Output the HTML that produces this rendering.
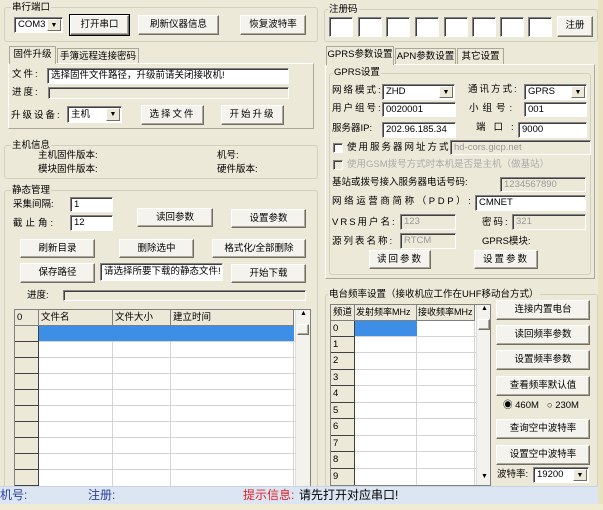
<!DOCTYPE html><html><head><meta charset="utf-8"><style>
*{box-sizing:border-box;margin:0;padding:0;white-space:nowrap}
body{width:603px;height:510px;position:relative;background:#ece9d8;font:9.5px "Liberation Sans","Noto Sans CJK SC",sans-serif;color:#000;overflow:hidden}
div,span{position:absolute}
.g{border:1px solid #d0d0bf;border-radius:3px}
.gl{background:#ece9d8;padding:0 1px;line-height:13px}
.b{background:#f4f3ee;border:1px solid;border-color:#fff #716f64 #716f64 #fff;box-shadow:inset -1px -1px 0 #aca899;text-align:center;line-height:17px}
.i{background:#fff;border:1px solid;border-color:#848284 #fff #fff #848284;box-shadow:inset 1px 1px 0 #404040;padding-left:3px;line-height:13px;overflow:hidden}
.d{color:#999;background:#ece9d8}
.ar{right:1px;top:1px;bottom:1px;width:14px;background:#ece9d8;border:1px solid;border-color:#fff #716f64 #716f64 #fff;font-size:7px;text-align:center;line-height:11px}
.t{line-height:14px}
.tab{border:1px solid #aca899;border-bottom:none;background:#ece9d8;text-align:center;line-height:15px}
.pn{border:1px solid;border-color:#fff #aca899 #aca899 #fff}
.gr{background:#fff;border:1px solid #808080;overflow:hidden}
.rh{background:#ece9d8;border-right:1px solid #404040;border-bottom:1px solid #404040;left:0;padding-left:2px;line-height:15px}
.hl{border-bottom:1px solid #d4d4d4;left:0;right:0}
.vl{border-left:1px solid #d4d4d4;top:0;bottom:0}
.hd{background:#ece9d8;border-right:1px solid #808080;border-bottom:1px solid #808080;top:0;height:16px;padding-left:2px;line-height:15px}
.sb{background:#f3f2ec;border-left:1px solid #ddd}
.w{letter-spacing:2px}
</style></head><body>
<div class="g" style="left:4px;top:7px;width:314px;height:35px"></div>
<span class="gl" style="left:11px;top:1px">串行端口</span>
<div class="i" style="left:14px;top:17px;width:49px;height:16px">COM3<div class="ar">▼</div></div>
<div class="b" style="left:70px;top:15px;width:59px;height:20px;outline:1px solid #000">打开串口</div>
<div class="b" style="left:138px;top:15px;width:81px;height:20px">刷新仪器信息</div>
<div class="b" style="left:240px;top:15px;width:66px;height:20px">恢复波特率</div>
<div class="pn" style="left:8px;top:63px;width:306px;height:66px"></div>
<div class="tab" style="left:9px;top:46px;width:47px;height:18px;z-index:2">固件升级</div>
<div class="tab" style="left:57px;top:48px;width:82px;height:15px">手簿远程连接密码</div>
<span class="t w" style="left:12px;top:68px">文件:</span>
<div class="i" style="left:47px;top:68px;width:242px;height:16px;line-height:14px">选择固件文件路径，升级前请关闭接收机!</div>
<span class="t w" style="left:12px;top:86px">进度:</span>
<div class="i" style="left:48px;top:87px;width:241px;height:12px;background:#ece9d8"></div>
<span class="t w" style="left:11px;top:109px">升级设备:</span>
<div class="i" style="left:67px;top:106px;width:55px;height:17px;line-height:15px">主机<div class="ar">▼</div></div>
<div class="b w" style="left:141px;top:105px;width:63px;height:20px">选择文件</div>
<div class="b w" style="left:221px;top:105px;width:63px;height:20px">开始升级</div>
<div class="g" style="left:4px;top:145px;width:314px;height:34px"></div>
<span class="gl" style="left:11px;top:139px">主机信息</span>
<span class="t" style="left:38px;top:149px">主机固件版本:</span>
<span class="t" style="left:38px;top:163px">模块固件版本:</span>
<span class="t" style="left:217px;top:149px">机号:</span>
<span class="t" style="left:217px;top:163px">硬件版本:</span>
<div class="g" style="left:4px;top:190px;width:314px;height:305px"></div>
<span class="gl" style="left:11px;top:184px">静态管理</span>
<span class="t" style="left:13px;top:198px">采集间隔:</span>
<div class="i" style="left:70px;top:197px;width:43px;height:15px">1</div>
<span class="t" style="left:13px;top:217px;letter-spacing:3px">截止角:</span>
<div class="i" style="left:70px;top:215px;width:43px;height:16px">12</div>
<div class="b" style="left:137px;top:208px;width:76px;height:19px">读回参数</div>
<div class="b" style="left:231px;top:209px;width:75px;height:19px">设置参数</div>
<div class="b" style="left:20px;top:239px;width:75px;height:19px">刷新目录</div>
<div class="b" style="left:119px;top:239px;width:75px;height:19px">删除选中</div>
<div class="b" style="left:212px;top:239px;width:94px;height:19px">格式化/全部删除</div>
<div class="b" style="left:20px;top:263px;width:75px;height:20px">保存路径</div>
<div class="i" style="left:100px;top:263px;width:123px;height:18px;line-height:16px">请选择所要下载的静态文件!</div>
<div class="b" style="left:231px;top:264px;width:75px;height:19px">开始下载</div>
<span class="t" style="left:27px;top:289px">进度:</span>
<div class="i" style="left:63px;top:290px;width:243px;height:11px;background:#ece9d8"></div>
<div class="gr" style="left:14px;top:309px;width:297px;height:178px">
<div class="hd" style="left:0;width:24px">0</div><div class="hd" style="left:24px;width:74px">文件名</div><div class="hd" style="left:98px;width:58px">文件大小</div><div class="hd" style="left:156px;width:123px">建立时间</div>
<div style="left:24px;top:16px;width:255px;height:16px;background:#3d8ee6"></div>
<div class="vl" style="left:97px;top:32px"></div><div class="vl" style="left:155px;top:32px"></div><div class="vl" style="left:278px;top:32px"></div>
<div class="hl" style="top:31px"></div><div class="hl" style="top:47px"></div><div class="hl" style="top:63px"></div><div class="hl" style="top:79px"></div><div class="hl" style="top:95px"></div><div class="hl" style="top:111px"></div><div class="hl" style="top:127px"></div><div class="hl" style="top:143px"></div><div class="hl" style="top:159px"></div>
<div class="rh" style="top:16px;width:24px;height:16px"></div><div class="rh" style="top:32px;width:24px;height:16px"></div><div class="rh" style="top:48px;width:24px;height:16px"></div><div class="rh" style="top:64px;width:24px;height:16px"></div><div class="rh" style="top:80px;width:24px;height:16px"></div><div class="rh" style="top:96px;width:24px;height:16px"></div><div class="rh" style="top:112px;width:24px;height:16px"></div><div class="rh" style="top:128px;width:24px;height:16px"></div><div class="rh" style="top:144px;width:24px;height:16px"></div><div class="rh" style="top:160px;width:24px;height:16px"></div>
<div class="sb" style="left:280px;top:0;width:16px;height:178px"><span style="left:4px;top:0;font-size:7px">▲</span><div class="b" style="left:1px;top:14px;width:12px;height:11px"></div></div>
</div>
<div class="g" style="left:324px;top:9px;width:274px;height:33px"></div>
<span class="gl" style="left:328px;top:3px">注册码</span>
<div class="i" style="left:329px;top:17px;width:24px;height:20px"></div>
<div class="i" style="left:358px;top:17px;width:24px;height:20px"></div>
<div class="i" style="left:386px;top:17px;width:24px;height:20px"></div>
<div class="i" style="left:415px;top:17px;width:24px;height:20px"></div>
<div class="i" style="left:444px;top:17px;width:24px;height:20px"></div>
<div class="i" style="left:472px;top:17px;width:24px;height:20px"></div>
<div class="i" style="left:500px;top:17px;width:24px;height:20px"></div>
<div class="i" style="left:528px;top:17px;width:24px;height:20px"></div>
<div class="b" style="left:557px;top:16px;width:36px;height:21px">注册</div>
<div class="pn" style="left:325px;top:64px;width:270px;height:215px"></div>
<div class="tab" style="left:326px;top:46px;width:68px;height:19px;z-index:2">GPRS参数设置</div>
<div class="tab" style="left:395px;top:48px;width:61px;height:16px">APN参数设置</div>
<div class="tab" style="left:457px;top:48px;width:47px;height:16px">其它设置</div>
<div class="g" style="left:329px;top:73px;width:262px;height:202px"></div>
<span class="gl" style="left:333px;top:66px">GPRS设置</span>
<span class="t w" style="left:332px;top:84px">网络模式:</span>
<div class="i" style="left:382px;top:84px;width:73px;height:16px">ZHD<div class="ar">▼</div></div>
<span class="t w" style="left:468px;top:83px">通讯方式:</span>
<div class="i" style="left:524px;top:84px;width:63px;height:16px">GPRS<div class="ar">▼</div></div>
<span class="t w" style="left:332px;top:102px">用户组号:</span>
<div class="i" style="left:382px;top:102px;width:74px;height:15px">0020001</div>
<span class="t" style="left:469px;top:102px;letter-spacing:4px">小组号:</span>
<div class="i" style="left:524px;top:102px;width:63px;height:15px">001</div>
<span class="t" style="left:332px;top:122px">服务器IP:</span>
<div class="i" style="left:382px;top:122px;width:74px;height:16px">202.96.185.34</div>
<span class="t" style="left:476px;top:121px;letter-spacing:8px">端口:</span>
<div class="i" style="left:518px;top:122px;width:69px;height:16px">9000</div>
<div class="i" style="left:333px;top:143px;width:10px;height:10px;padding:0"></div>
<span class="t w" style="left:347px;top:141px">使用服务器网址方式</span>
<div class="i d" style="left:450px;top:140px;width:141px;height:15px">hd-cors.gicp.net</div>
<div class="i" style="left:333px;top:160px;width:10px;height:10px;padding:0;background:#ece9d8"></div>
<span class="t" style="left:347px;top:158px;color:#aaa">使用GSM拨号方式时本机是否是主机（做基站）</span>
<span class="t" style="left:332px;top:176px">基站或拨号接入服务器电话号码:</span>
<div class="i d" style="left:500px;top:177px;width:86px;height:15px">1234567890</div>
<span class="t" style="left:332px;top:195px;letter-spacing:2.6px">网络运营商简称（PDP）:</span>
<div class="i" style="left:475px;top:195px;width:111px;height:16px">CMNET</div>
<span class="t w" style="left:332px;top:216px">VRS用户名:</span>
<div class="i d" style="left:400px;top:214px;width:56px;height:16px">123</div>
<span class="t w" style="left:482px;top:216px">密码:</span>
<div class="i d" style="left:512px;top:214px;width:74px;height:16px">321</div>
<span class="t w" style="left:332px;top:235px">源列表名称:</span>
<div class="i d" style="left:400px;top:233px;width:56px;height:16px">RTCM</div>
<span class="t" style="left:482px;top:235px">GPRS模块:</span>
<div class="b w" style="left:369px;top:250px;width:62px;height:19px">读回参数</div>
<div class="b w" style="left:474px;top:250px;width:64px;height:19px">设置参数</div>
<div class="g" style="left:325px;top:294px;width:273px;height:193px"></div>
<span class="gl" style="left:328px;top:288px">电台频率设置（接收机应工作在UHF移动台方式）</span>
<div class="gr" style="left:330px;top:304px;width:161px;height:182px">
<div class="hd" style="left:0;width:24px">频道</div><div class="hd" style="left:24px;width:62px;font-size:9px;padding-left:1px">发射频率MHz</div><div class="hd" style="left:86px;width:58px;font-size:9px;padding-left:1px">接收频率MHz</div>
<div style="left:24px;top:16px;width:62px;height:16px;background:#3d8ee6"></div>
<div class="vl" style="left:85px;top:32px"></div><div class="vl" style="left:143px;top:16px"></div>
<div class="hl" style="top:31px"></div><div class="hl" style="top:47px"></div><div class="hl" style="top:64px"></div><div class="hl" style="top:80px"></div><div class="hl" style="top:97px"></div><div class="hl" style="top:113px"></div><div class="hl" style="top:130px"></div><div class="hl" style="top:146px"></div><div class="hl" style="top:163px"></div>
<div class="rh" style="top:16px;width:24px;height:16px">0</div><div class="rh" style="top:32px;width:24px;height:16px">1</div><div class="rh" style="top:48px;width:24px;height:17px">2</div><div class="rh" style="top:65px;width:24px;height:16px">3</div><div class="rh" style="top:81px;width:24px;height:17px">4</div><div class="rh" style="top:98px;width:24px;height:16px">5</div><div class="rh" style="top:114px;width:24px;height:17px">6</div><div class="rh" style="top:131px;width:24px;height:16px">7</div><div class="rh" style="top:147px;width:24px;height:17px">8</div><div class="rh" style="top:164px;width:24px;height:17px">9</div>
<div class="sb" style="left:145px;top:0;width:15px;height:182px"><span style="left:4px;top:0;font-size:7px">▲</span><div class="b" style="left:1px;top:14px;width:12px;height:11px"></div><span style="left:4px;top:168px;font-size:7px">▼</span></div>
</div>
<div class="b" style="left:496px;top:300px;width:94px;height:20px">连接内置电台</div>
<div class="b" style="left:496px;top:325px;width:94px;height:20px">读回频率参数</div>
<div class="b" style="left:496px;top:350px;width:94px;height:20px">设置频率参数</div>
<div class="b" style="left:496px;top:376px;width:94px;height:20px">查看频率默认值</div>
<span class="t" style="left:503px;top:399px">◉ 460M &nbsp; ○ 230M</span>
<div class="b" style="left:496px;top:419px;width:94px;height:20px">查询空中波特率</div>
<div class="b" style="left:496px;top:445px;width:94px;height:20px">设置空中波特率</div>
<span class="t" style="left:497px;top:468px">波特率:</span>
<div class="i" style="left:533px;top:467px;width:56px;height:16px">19200<div class="ar">▼</div></div>
<div style="left:0;top:486px;width:598px;height:18px;background:#dce6f2;border-top:1px solid #c8d4e4;font-size:12px;line-height:16px">
<span style="left:0;color:#2b3fa0">机号:</span><span style="left:88px;color:#2b3fa0">注册:</span><span style="left:243px;color:#e0202a">提示信息:</span><span style="left:299px">请先打开对应串口!</span></div>
<div style="left:598px;top:0;width:5px;height:510px;background:#e8e2c0"></div>
<div style="left:0;top:504px;width:603px;height:6px;background:#f0ecd4"></div>
</body></html>
